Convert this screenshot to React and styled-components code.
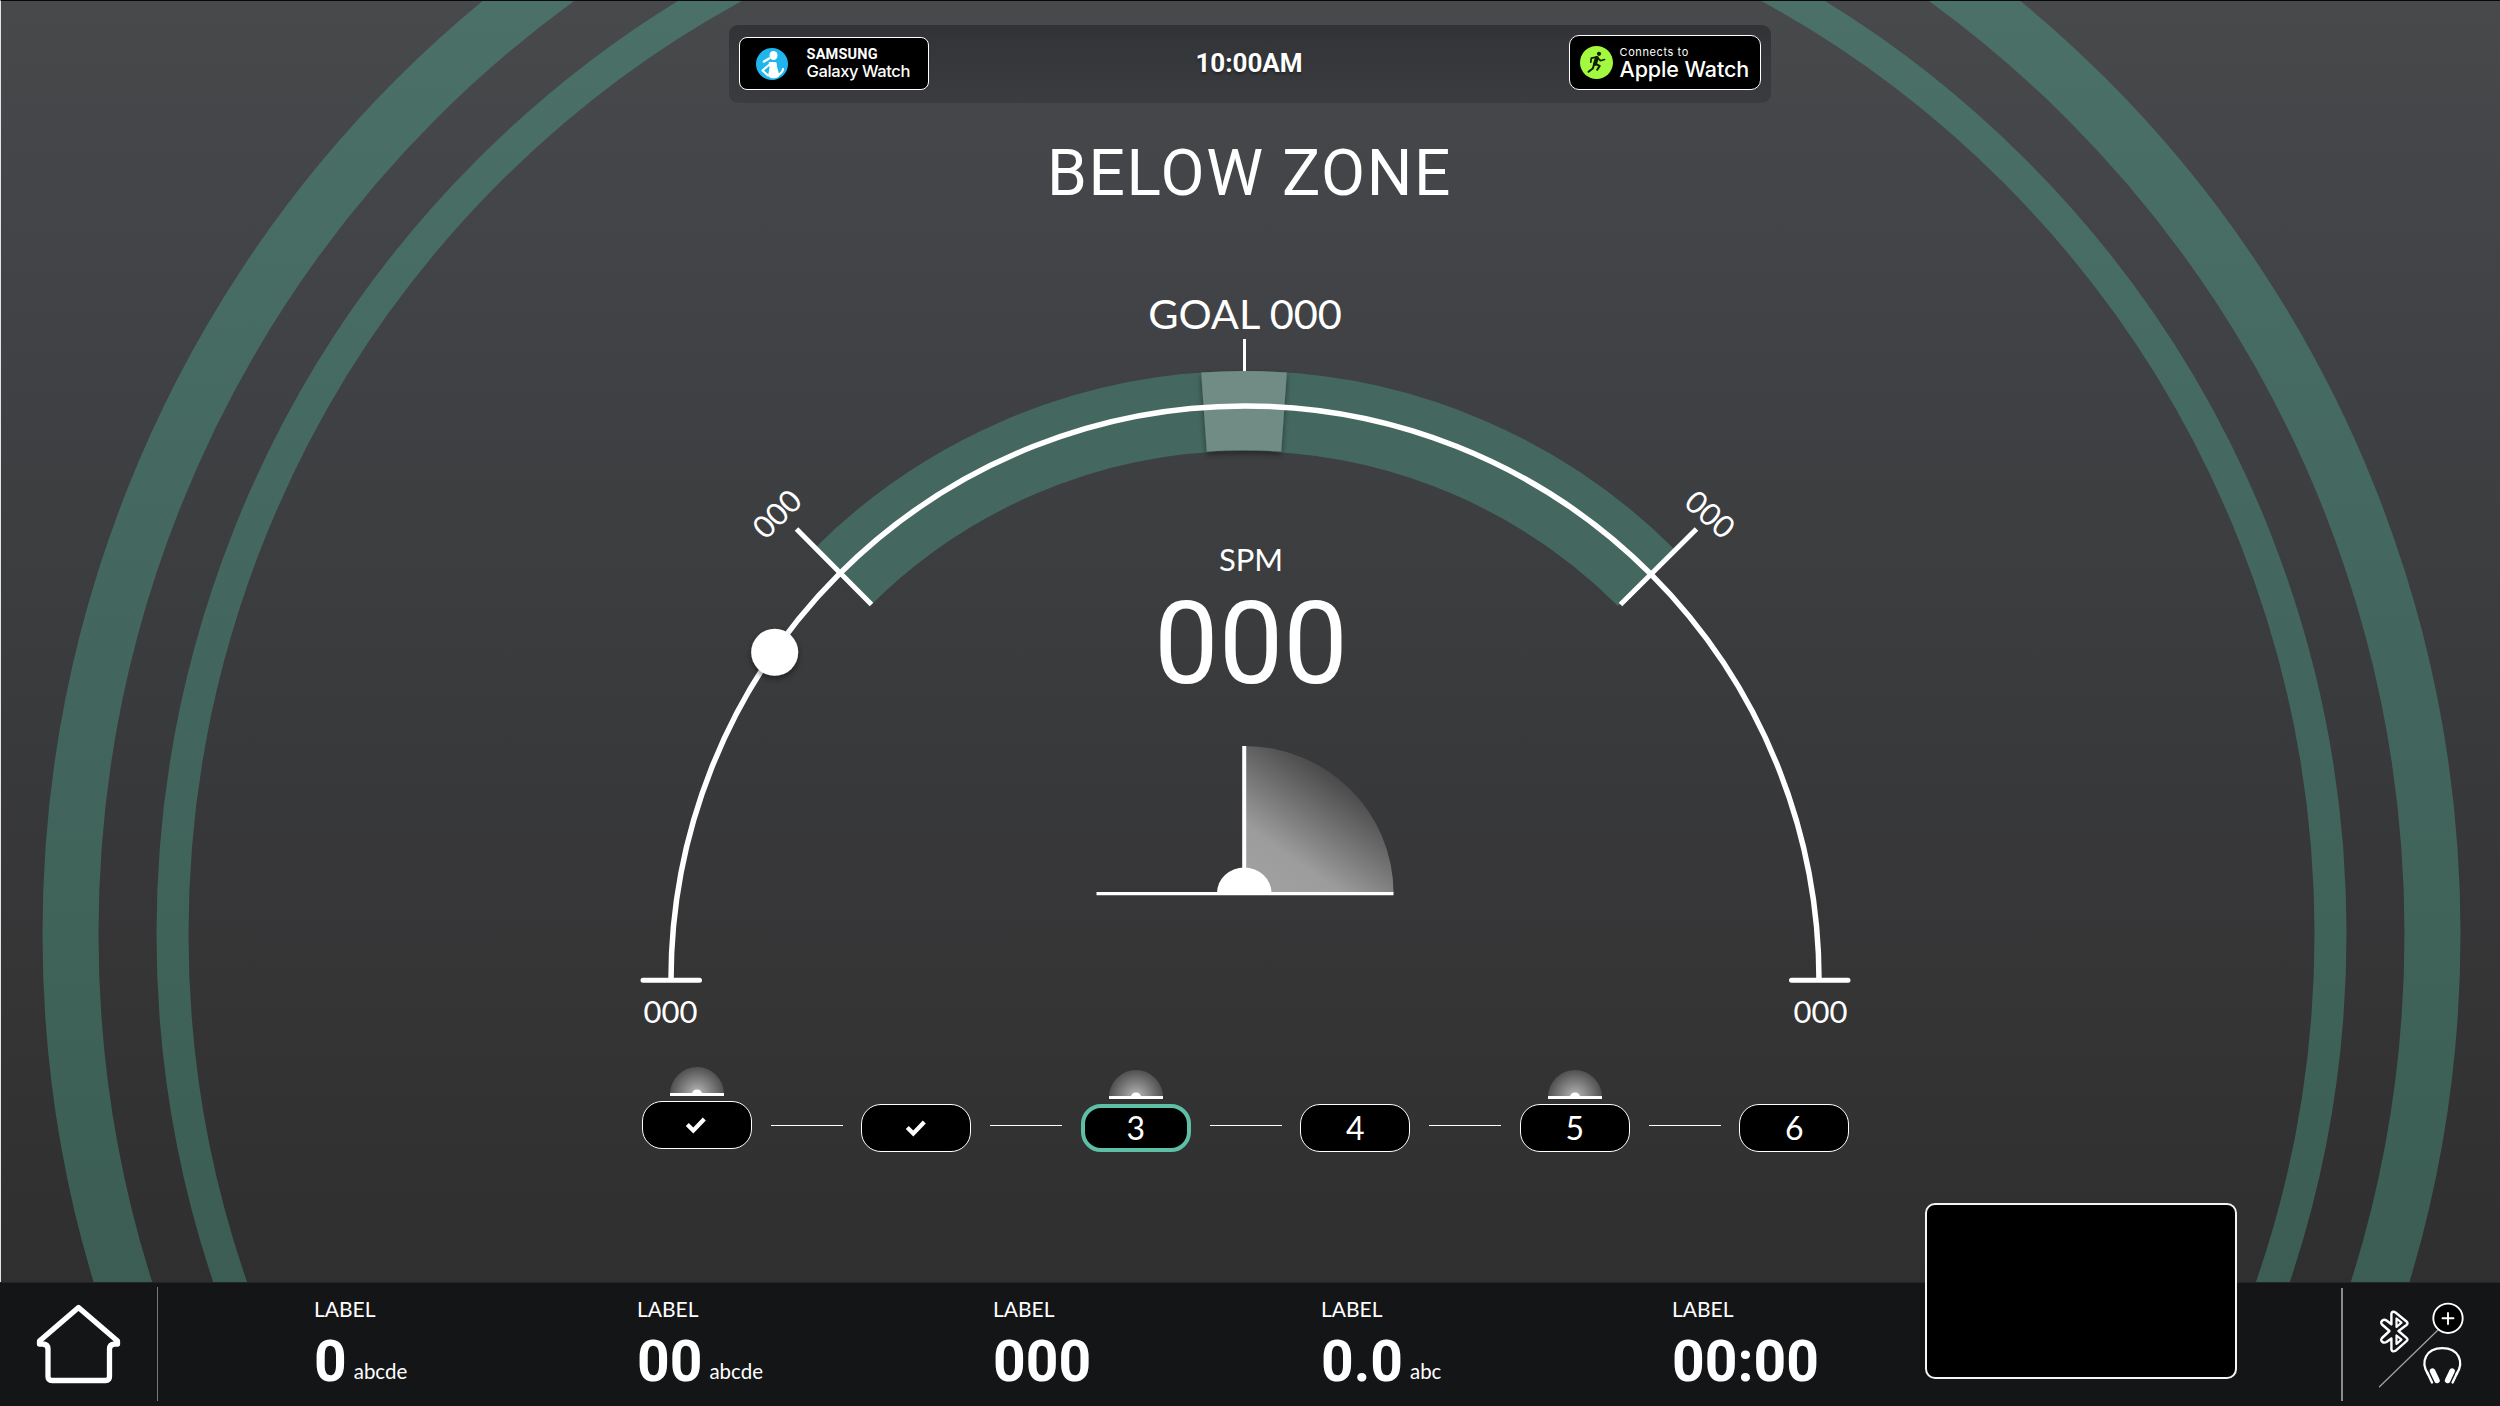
import React from 'react';
import styled, { createGlobalStyle } from 'styled-components';

const GlobalStyle = createGlobalStyle`
    * {
        box-sizing: border-box;
    }
    body {
        margin: 0;
        background: #141517;
        color: #fff;
        font-family: Lato, sans-serif;
    }
`;

const Screen = styled.div`
    width: 2500px;
    height: 1406px;
    display: flex;
    flex-direction: column;
    overflow: hidden;
`;

const Stage = styled.main`
    position: relative;
    height: 1282px;
    display: flex;
    flex-direction: column;
    align-items: center;
    padding: 24px 2px 0 0;
    border-top: 1px solid #08090a;
    border-left: 1px solid #e4e4e4;
    background: linear-gradient(#48494b 0%, #434447 18%, #3b3c3e 48%, #343435 80%, #2f2f2f 100%);
`;

// big rings behind everything
const RingsSvg = styled.svg`
    position: absolute;
    top: 0;
    left: -1px;
    width: 2500px;
    height: 1281px;
`;

const Rings = () => (
    <RingsSvg viewBox="0 1 2500 1281" fill="none">
        <defs>
            <linearGradient id="ringFill" gradientUnits="userSpaceOnUse" x1="0" y1="0" x2="0" y2="1282">
                <stop offset="0" stopColor="#4a7067" />
                <stop offset="1" stopColor="#3b5d54" />
            </linearGradient>
        </defs>
        <circle cx="1251.500" cy="934" r="1181" stroke="url(#ringFill)" strokeWidth="56" />
        <circle cx="1251.500" cy="934" r="1079" stroke="url(#ringFill)" strokeWidth="32" />
    </RingsSvg>
);

// top bar with watch badges
const TopBar = styled.header`
    position: relative;
    width: 1042px;
    height: 78px;
    flex: none;
    display: grid;
    grid-template-columns: 1fr auto 1fr;
    align-items: start;
    padding: 0 10px;
    border-radius: 9px;
    background: linear-gradient(#323336, #3b3c3f);
`;

const Time = styled.div`
    align-self: center;
    padding: 0 1px 2px 0;
    font: 700 26px/30px Roboto, sans-serif;
    text-shadow: 0 2px 3px rgba(0, 0, 0, 0.4);
`;

const Badge = styled.div`
    width: ${(p) => p.$width}px;
    height: ${(p) => p.$height}px;
    margin-top: ${(p) => p.$top}px;
    display: flex;
    align-items: center;
    border: 1.5px solid #fff;
    border-radius: ${(p) => p.$radius}px;
    background: #000;
`;

const SamsungBadge = styled(Badge)`
    gap: 19px;
    padding-left: 16px;
`;

const AppleBadge = styled(Badge)`
    justify-self: end;
    gap: 7px;
    padding-left: 10px;
`;

const BadgeText = styled.div`
    display: flex;
    flex-direction: column;
    white-space: nowrap;
`;

const SamsungName = styled.span`
    font: 700 14.5px/16px Roboto, sans-serif;
    letter-spacing: 0.2px;
`;

const GalaxyName = styled.span`
    font: 500 16.5px/17px Inter, sans-serif;
    letter-spacing: -0.4px;
`;

const ConnectsTo = styled.span`
    padding-top: 2px;
    font: 400 11px/12px Inter, sans-serif;
    letter-spacing: 0.6px;
`;

const AppleName = styled.span`
    font: 500 21.5px/23px Inter, sans-serif;
    letter-spacing: -0.1px;
`;

const HealthLogo = () => (
    <svg width="32" height="32" viewBox="0 0 32 32" fill="none" stroke="#fff" strokeLinecap="round" strokeLinejoin="round">
        <circle cx="16" cy="16" r="16" fill="#1fb6ee" stroke="none" />
        <ellipse cx="17.500" cy="7.500" rx="4" ry="4.600" fill="#fff" stroke="none" />
        <path d="M8 13.500 13 10.500" strokeWidth="2.600" />
        <path d="M13.500 14.500h6.500l.5 4 2.500 9.500c-3 2.500-8 2.500-10.500 0l1.500-8z" fill="#fff" strokeWidth="1" />
        <path d="M14 16 6.500 22.500 12 27.500" strokeWidth="2.200" />
        <path d="M22 27c3-1.500 4.800-3 5-6" strokeWidth="2.200" />
    </svg>
);

const RunnerLogo = () => (
    <svg width="33" height="33" viewBox="0 0 33 33" fill="none" stroke="#0f1d02" strokeLinecap="round" strokeLinejoin="round">
        <circle cx="16.500" cy="16.500" r="16.500" fill="#a2f93f" stroke="none" />
        <circle cx="19" cy="7.800" r="2.100" fill="#0f1d02" stroke="none" />
        <path d="M10.800 16.200 11.300 12.200 16.500 11.200M17.700 11.800 20.400 14.700 24.500 13.500" strokeWidth="1.700" />
        <path d="M16.900 12 15 17.800" strokeWidth="4" />
        <path d="M15.500 18 19.700 19.900 17.200 23.800M14 18.500 12.800 22.500 8.500 25.800" strokeWidth="2" />
    </svg>
);

const Title = styled.h1`
    position: relative;
    margin: 33px 0 0;
    font: 400 64px/75px Roboto, sans-serif;
    letter-spacing: 1.6px;
`;

// gauge and the readout share one grid cell
const Gauge = styled.section`
    position: relative;
    width: 1300px;
    height: 780px;
    margin-top: 49px;
    flex: none;
    display: grid;
    justify-items: center;
    > * {
        grid-area: 1 / 1;
    }
`;

const GaugeSvg = styled.svg`
    width: 1300px;
    height: 780px;
    font-family: Lato, sans-serif;
    font-size: 31px;
    fill: none;
    text {
        fill: #fff;
        text-anchor: middle;
    }
`;

const Readout = styled.div`
    position: relative;
    display: flex;
    flex-direction: column;
    align-items: center;
    padding: 280px 0 0 3px;
`;

const ReadoutLabel = styled.div`
    font-size: 31px;
    line-height: 38px;
`;

const ReadoutValue = styled.div`
    margin-top: -2px;
    font: 400 115px/135px Roboto, sans-serif;
`;

const DialSvg = styled.svg`
    width: 298px;
    height: 152px;
    margin: 34px 12px 0 0;
`;

const GaugeArc = () => (
    <GaugeSvg viewBox="600 260 1300 780">
        <defs>
            <filter id="softShadow" x="-30%" y="-30%" width="160%" height="170%">
                <feDropShadow dx="0" dy="3" stdDeviation="3" floodColor="#000" floodOpacity="0.45" />
            </filter>
        </defs>
        <path d="M841.700 577.700A569 569 0 0 1 1646.300 577.700" stroke="#44685f" strokeWidth="80" />
        <path
            d="M1201.200 372.500A609 609 0 0 1 1286.800 372.500L1281.200 451.500A529 529 0 0 0 1206.800 451.500Z"
            fill="#708c85"
            filter="url(#softShadow)"
        />
        <path d="M671 980A574 574 0 0 1 1819 980" stroke="#fff" strokeWidth="5.500" />
        <path d="M1244.500 339V371" stroke="#fff" strokeWidth="3" />
        <path d="M796.500 529 871.500 604.500M1696.500 529 1620.500 604.500" stroke="#fff" strokeWidth="5" />
        <path d="M643 980.300H699.500M1791.500 980.300H1848" stroke="#fff" strokeWidth="5" strokeLinecap="round" />
        <circle cx="774.700" cy="652.300" r="23.500" fill="#fff" filter="url(#softShadow)" />
        <text x="1245" y="329" fontSize="41.500">GOAL 000</text>
        <text x="670.500" y="1023">000</text>
        <text x="1820.500" y="1023">000</text>
        <text transform="translate(777 514) rotate(-45)" y="11">000</text>
        <text transform="translate(1710 514.500) rotate(41.500)" y="11">000</text>
    </GaugeSvg>
);

const Dial = () => (
    <DialSvg viewBox="1095.500 745 298 152">
        <defs>
            <linearGradient id="dialFill" gradientUnits="userSpaceOnUse" x1="1244" y1="893" x2="1329" y2="772">
                <stop offset="0" stopColor="#a2a2a2" />
                <stop offset="0.380" stopColor="#9c9c9c" />
                <stop offset="1" stopColor="#4a4a4b" />
            </linearGradient>
        </defs>
        <path d="M1244 893V746A149 147 0 0 1 1393 893Z" fill="url(#dialFill)" />
        <path d="M1241.700 746H1245.700V893H1241.700Z" fill="#fff" />
        <path d="M1216.500 893A27.200 25.500 0 0 1 1271 893Z" fill="#fff" />
        <path d="M1096 892H1393V895.300H1096Z" fill="#fff" />
    </DialSvg>
);

// interval steps
const Steps = styled.nav`
    position: relative;
    height: 86px;
    display: flex;
    align-items: flex-end;
    margin: 26px 8px 0 0;
`;

const StepItem = styled.div`
    width: 110px;
    display: flex;
    flex-direction: column;
    align-items: center;
    gap: 5px;
    margin-bottom: ${(p) => (p.$raised ? '3px' : '0')};
`;

const Pill = styled.div`
    width: 110px;
    height: 48px;
    display: flex;
    align-items: center;
    justify-content: center;
    border: ${(p) => (p.$active ? '4px solid #5cbfa6' : '1.5px solid #fff')};
    border-radius: 20px;
    background: #000;
    font-size: 32px;
    line-height: 44px;
`;

const Connector = styled.div`
    width: 72px;
    height: 1.5px;
    margin: 0 18.7px 26px 18.8px;
    background: #fff;
`;

const Check = () => (
    <svg width="21" height="18" viewBox="0.500 0 21 18" fill="none" stroke="#fff" strokeWidth="4.200">
        <path d="M1.800 8.500 7.800 14.500 18.800 3" />
    </svg>
);

const Dome = () => (
    <svg width="54" height="29" viewBox="0 0 54 29">
        <defs>
            <radialGradient id="domeFill" gradientUnits="userSpaceOnUse" cx="27" cy="27" r="27">
                <stop offset="0" stopColor="#bdbdbd" />
                <stop offset="0.400" stopColor="#8e8e8e" />
                <stop offset="1" stopColor="#505051" />
            </radialGradient>
        </defs>
        <path d="M0 27A27 27 0 0 1 54 27Z" fill="url(#domeFill)" />
        <path d="M22 27A5 4.500 0 0 1 32 27Z" fill="#fff" />
        <path d="M0 26H54V29H0Z" fill="#fff" />
    </svg>
);

// bottom bar
const Footer = styled.footer`
    position: relative;
    height: 124px;
    display: flex;
    align-items: flex-start;
    border-top: 1px solid #232528;
    background: #141517;
`;

const HomeButton = styled.div`
    width: 158px;
    height: 114px;
    margin-top: 4px;
    padding: 15px 0 0 35px;
    border-right: 1.5px solid #77787a;
`;

const Metrics = styled.div`
    display: grid;
    grid-template-columns: 323px 356px 328px 351px 253px;
    padding-left: 156px;
`;

const Metric = styled.div`
    display: flex;
    flex-direction: column;
    padding-top: 13px;
`;

const MetricLabel = styled.div`
    font-size: 21px;
    line-height: 26px;
`;

const MetricValue = styled.div`
    display: flex;
    align-items: baseline;
    gap: 7px;
    margin-top: 7px;
    font: 700 57px/66px Roboto, sans-serif;
`;

const Unit = styled.span`
    font: 400 20.5px/26px Lato, sans-serif;
    transform: translateY(-2px);
`;

// the preview pokes out above the bar
const Preview = styled.div`
    width: 312px;
    height: 176px;
    align-self: flex-end;
    margin-bottom: 27px;
    flex: none;
    border: 2px solid #f5f5f5;
    border-radius: 10px;
    background: #000;
`;

const Tools = styled.div`
    width: 159px;
    height: 113px;
    margin: 5px 0 0 auto;
    padding: 12px 0 0 32px;
    border-left: 2px solid #8a8b8d;
`;

const HomeIcon = () => (
    <svg width="88" height="84" viewBox="35 1302 88 84" fill="none" stroke="#fff" strokeWidth="5.300" strokeLinejoin="round">
        <path d="M78.500 1307.500 117.500 1341V1344H114.500Q109.500 1344.500 109.500 1349V1376.500Q109.500 1380.500 105.500 1380.500H52Q48 1380.500 48 1376.500V1349Q48 1344.500 43 1344H39.500V1341Z" />
    </svg>
);

const ToolIcons = () => (
    <svg width="90" height="90" viewBox="2375 1300 90 90" fill="none" stroke="#fff" strokeLinejoin="round" strokeLinecap="round">
        <path d="M2438 1330 2379.500 1386.700" stroke="#a0a0a0" strokeWidth="1.300" />
        <path
            d="M2391.400 1313.500Q2392.500 1310.500 2395.500 1312.500L2406.500 1321.500Q2408.500 1323.300 2406.500 1325L2398.500 1331 2406.500 1337.800Q2408.500 1339.500 2406.500 1341.200L2395.500 1350.800Q2392.500 1352.500 2391.400 1349.500V1338.500L2386.500 1342C2383.500 1343.800 2379.500 1340.800 2382 1338L2389.500 1331 2382 1324.500C2379.500 1322 2383.500 1318.200 2386.500 1320.500L2391.400 1324.300Z"
            strokeWidth="2.400"
        />
        <path d="M2396.500 1318.500V1327L2401.500 1322.700ZM2396.500 1335.500V1344L2401.500 1339.700Z" strokeWidth="2.200" />
        <circle cx="2448" cy="1318.300" r="14.700" fill="#000" strokeWidth="1.900" />
        <path d="M2442.500 1318.300H2453.500M2448 1313V1324" strokeWidth="1.900" />
        <path d="M2428 1374C2420 1362 2426 1348.200 2442.300 1348.200S2464.600 1362 2456.600 1374" strokeWidth="2.300" />
        <path d="M2432.500 1371 2437 1380.500M2452.100 1371 2447.600 1380.500" strokeWidth="5.500" />
        <path d="M2427.500 1373 2432 1382.500M2457.100 1373 2452.600 1382.500" strokeWidth="2.400" />
    </svg>
);

const steps = [
    { done: true, dome: true, raised: true },
    { done: true },
    { text: '3', dome: true, active: true },
    { text: '4' },
    { text: '5', dome: true },
    { text: '6' },
];

const metrics = [
    { value: '0', unit: 'abcde' },
    { value: '00', unit: 'abcde' },
    { value: '000' },
    { value: '0.0', unit: 'abc' },
    { value: '00:00' },
];

export default function App() {
    return (
        <Screen>
            <GlobalStyle />
            <Stage>
                <Rings />
                <TopBar>
                    <SamsungBadge $width={190} $height={53} $top={12} $radius={8}>
                        <HealthLogo />
                        <BadgeText>
                            <SamsungName>SAMSUNG</SamsungName>
                            <GalaxyName>Galaxy Watch</GalaxyName>
                        </BadgeText>
                    </SamsungBadge>
                    <Time>10:00AM</Time>
                    <AppleBadge $width={192} $height={55} $top={10} $radius={10}>
                        <RunnerLogo />
                        <BadgeText>
                            <ConnectsTo>Connects to</ConnectsTo>
                            <AppleName>Apple Watch</AppleName>
                        </BadgeText>
                    </AppleBadge>
                </TopBar>
                <Title>BELOW ZONE</Title>
                <Gauge>
                    <GaugeArc />
                    <Readout>
                        <ReadoutLabel>SPM</ReadoutLabel>
                        <ReadoutValue>000</ReadoutValue>
                        <Dial />
                    </Readout>
                </Gauge>
                <Steps>
                    {steps.map((step, i) => (
                        <React.Fragment key={i}>
                            {i > 0 && <Connector />}
                            <StepItem $raised={step.raised}>
                                {step.dome && <Dome />}
                                <Pill $active={step.active}>{step.done ? <Check /> : step.text}</Pill>
                            </StepItem>
                        </React.Fragment>
                    ))}
                </Steps>
            </Stage>
            <Footer>
                <HomeButton>
                    <HomeIcon />
                </HomeButton>
                <Metrics>
                    {metrics.map((m, i) => (
                        <Metric key={i}>
                            <MetricLabel>LABEL</MetricLabel>
                            <MetricValue>
                                {m.value}
                                {m.unit && <Unit>{m.unit}</Unit>}
                            </MetricValue>
                        </Metric>
                    ))}
                </Metrics>
                <Preview />
                <Tools>
                    <ToolIcons />
                </Tools>
            </Footer>
        </Screen>
    );
}
